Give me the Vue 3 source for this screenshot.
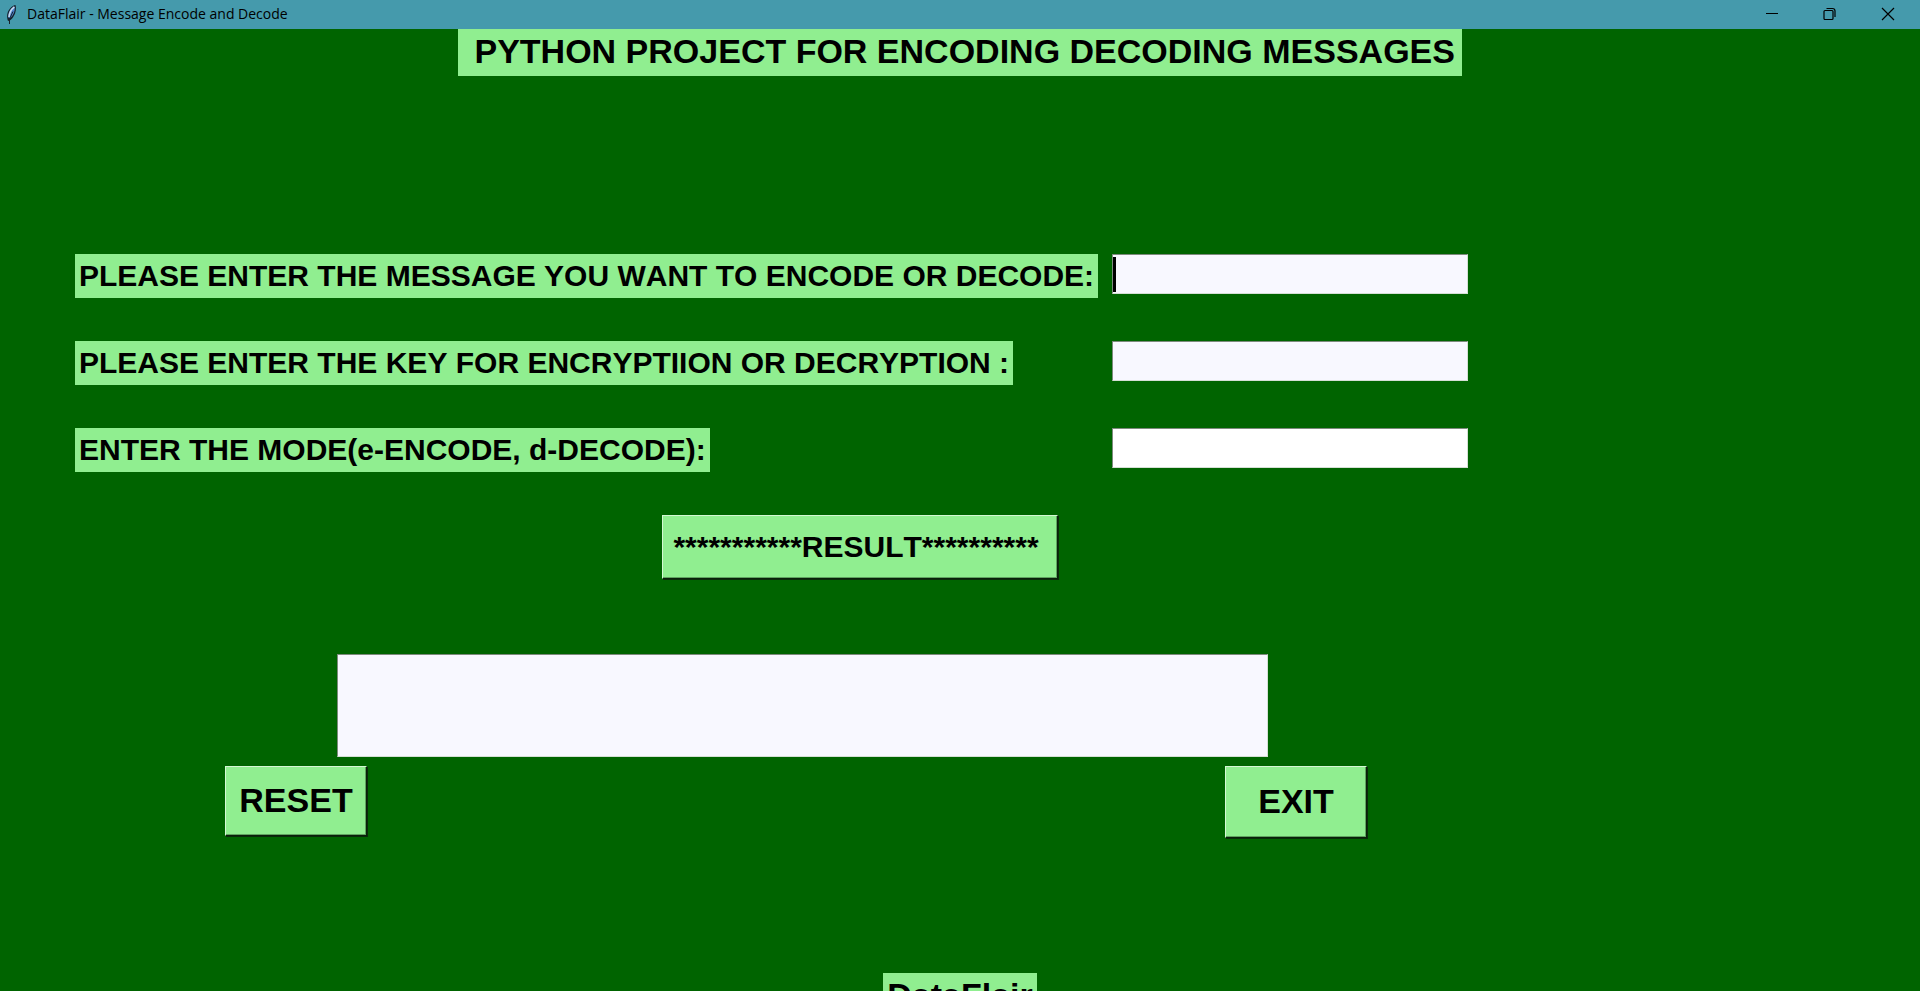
<script setup>
import { ref } from 'vue'

const fields = [
  { id: 'message', label: 'PLEASE ENTER THE MESSAGE YOU WANT TO ENCODE OR DECODE:', tint: true, caret: true },
  { id: 'key', label: 'PLEASE ENTER THE KEY FOR ENCRYPTIION OR DECRYPTION :', tint: true, caret: false },
  { id: 'mode', label: 'ENTER THE MODE(e-ENCODE, d-DECODE):', tint: false, caret: false },
]
const values = ref({ message: '', key: '', mode: '' })
const output = ref('')

function shiftText(text, key, direction) {
  if (!key) return text
  return [...text]
    .map((ch, i) => {
      const offset = key.charCodeAt(i % key.length) * direction
      return String.fromCharCode((ch.charCodeAt(0) + offset + 256) % 256)
    })
    .join('')
}

function showResult() {
  const { message, key, mode } = values.value
  if (mode === 'e') output.value = btoa(shiftText(message, key, 1))
  else if (mode === 'd') output.value = shiftText(atob(message), key, -1)
  else output.value = 'Invalid Mode'
}

function reset() {
  values.value = { message: '', key: '', mode: '' }
  output.value = ''
}

function exit() {
  window.close()
}
</script>

<template>
  <div class="window">
    <header class="titlebar">
      <svg class="feather" width="14" height="21" viewBox="0 0 14 21" aria-hidden="true">
        <path d="M3 17C1.500 13 1.800 8 5 4.500C7 2.300 9 1 10.500 1C11.500 4 11 9 8.500 12.500C7 15 5.500 16.500 3 17Z" fill="#16202c" />
        <path d="M3.500 14C3 10 4 7 6 5C7.500 3.400 8.800 2.400 9.600 2.400C10.200 5 9.400 8.500 7.500 11.500C6.200 13.500 5 14.500 3.500 14Z" fill="#4f86d0" />
        <path d="M4 13C4.200 9.500 6 5.500 9.300 2.800" fill="none" stroke="#c9d9ee" stroke-width="1.600" />
        <path d="M4.500 20V15L8 7.500" fill="none" stroke="#17202b" stroke-width="1" />
      </svg>
      <span class="caption">DataFlair - Message Encode and Decode</span>
      <div class="controls">
        <button type="button" class="control" aria-label="Minimize">
          <svg width="14" height="14" viewBox="0 0 14 14"><path d="M1 6.500H13" stroke="#000" fill="none" /></svg>
        </button>
        <button type="button" class="control" aria-label="Restore">
          <svg width="14" height="14" viewBox="0 0 14 14">
            <rect x="1" y="3.500" width="9" height="9" rx="1" stroke="#000" fill="none" stroke-width="1.200" />
            <path d="M3.500 1.500H9.500C11.200 1.500 12 2.300 12 4V10" stroke="#000" fill="none" stroke-width="1.200" />
          </svg>
        </button>
        <button type="button" class="control" aria-label="Close" @click="exit">
          <svg width="14" height="14" viewBox="0 0 14 14"><path d="M1 1L13 13M13 1L1 13" stroke="#000" fill="none" stroke-width="1.200" /></svg>
        </button>
      </div>
    </header>

    <main class="content">
      <h1 class="tag heading">&nbsp;PYTHON PROJECT FOR ENCODING DECODING MESSAGES</h1>

      <form class="form" @submit.prevent="showResult">
        <div v-for="field in fields" :key="field.id" class="row">
          <label class="tag" :for="field.id">{{ field.label }}</label>
          <span class="entry">
            <input
              :id="field.id"
              v-model="values[field.id]"
              class="box"
              :class="{ tint: field.tint }"
              type="text"
              autocomplete="off"
            />
            <i v-if="field.caret && !values[field.id]" class="caret"></i>
          </span>
        </div>
        <button type="submit" class="raised result">***********RESULT**********</button>
      </form>

      <input v-model="output" class="box tint output" type="text" aria-label="Result" readonly />

      <div class="actions">
        <button type="button" class="raised large" @click="reset">RESET</button>
        <button type="button" class="raised large tall" @click="exit">EXIT</button>
      </div>
    </main>

    <footer class="tag heading brand">DataFlair</footer>
  </div>
</template>

<style>
body {
  margin: 0;
  background: #006400;
}
</style>

<style scoped>
.window {
  display: flex;
  flex-direction: column;
  height: 100vh;
  overflow: hidden;
  background: #006400;
  color: #000;
  font-family: "Liberation Sans", Arial, sans-serif;
  font-kerning: none;
}

.titlebar {
  display: flex;
  flex: none;
  align-items: flex-start;
  height: 29px;
  padding-left: 5px;
  background: #459aac;
  font-family: "Open Sans", "Noto Sans", sans-serif;
}

.feather {
  margin-top: 4px;
}

.caption {
  margin-left: 8px;
  font-size: 14px;
  line-height: 28px;
}

.controls {
  display: flex;
  margin-left: auto;
  padding-right: 3px;
}

.control {
  display: flex;
  align-items: center;
  justify-content: center;
  width: 58px;
  height: 28px;
  padding: 0;
  border: 0;
  background: transparent;
}

.content {
  display: flex;
  flex: none;
  flex-direction: column;
}

.tag {
  box-sizing: border-box;
  padding: 0 4px;
  background: #90ee90;
  font-size: 30px;
  font-weight: bold;
  line-height: 44px;
  white-space: nowrap;
}

.heading {
  flex: none;
  align-self: center;
  margin: 0;
  padding: 0 7px 3px;
  font-size: 34px;
}

.form {
  display: flex;
  flex-direction: column;
  gap: 43px;
  margin: 178px 75px 0;
}

.row {
  display: grid;
  grid-template-columns: minmax(0, 1037px) 356px;
  align-items: start;
  justify-items: start;
}

.entry {
  position: relative;
  width: 100%;
}

.box {
  display: block;
  box-sizing: border-box;
  width: 100%;
  height: 40px;
  padding: 0 4px;
  border: 1px solid;
  border-color: #7d8a7d #d5dfd5 #d5dfd5 #7d8a7d;
  border-radius: 0;
  outline: 0;
  background: #fff;
  font: bold 30px "Liberation Sans", Arial, sans-serif;
}

.tint {
  background: #f8f8ff;
}

.caret {
  position: absolute;
  top: 3px;
  left: 1px;
  width: 3px;
  height: 35px;
  background: #000;
}

.raised {
  box-sizing: border-box;
  border: 1px solid;
  border-color: #d4f8d4 #0a1f0a #0a1f0a #d4f8d4;
  border-radius: 0;
  box-shadow: inset -1px -1px 0 #5fa35f, 1px 1px 0 #0a2a0a;
  background: #90ee90;
  color: #000;
  font-family: inherit;
  font-weight: bold;
  font-kerning: none;
}

.result {
  width: 396px;
  height: 64px;
  margin-left: 587px;
  padding: 0 8px 0 0;
  font-size: 30px;
}

.output {
  width: 931px;
  height: 103px;
  margin: 75px 0 0 337px;
}

.actions {
  display: flex;
  align-items: flex-start;
  justify-content: space-between;
  width: 1142px;
  margin: 9px 0 0 225px;
}

.large {
  width: 142px;
  height: 70px;
  padding: 0 0 2px;
  font-size: 34px;
}

.tall {
  height: 72px;
}

.brand {
  margin-top: 135px;
  padding: 0 4px 3px;
}
</style>
